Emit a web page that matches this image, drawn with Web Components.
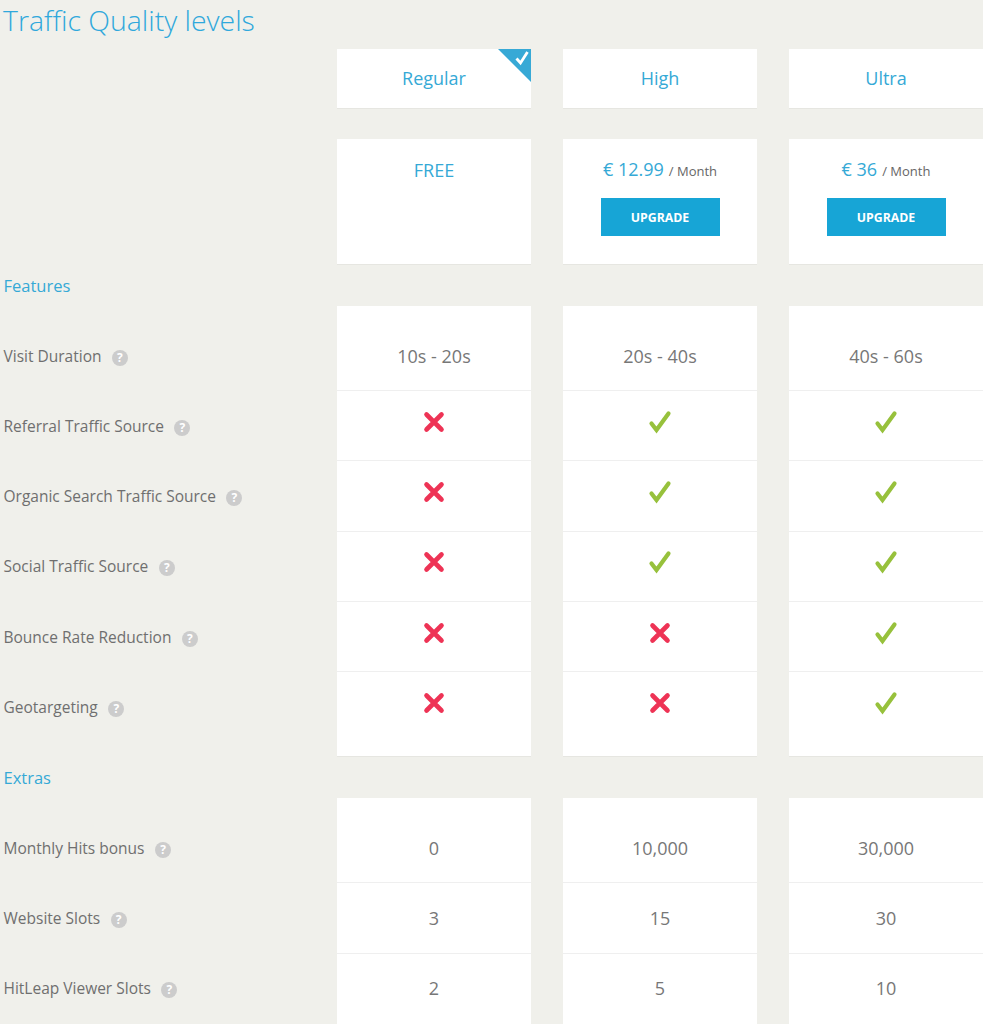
<!DOCTYPE html>
<html>
<head>
<meta charset="utf-8">
<title>Traffic Quality levels</title>
<style>
  html, body { margin: 0; padding: 0; background: #f0f0eb; }
  body { height: 1024px; overflow: hidden; font-family: "Open Sans", sans-serif; }
  .free { margin-top: 1px; }
</style>
</head>
<body>
<tq-page>
  <tq-title>Traffic Quality levels</tq-title>

  <tq-row kind="plan">
    <tq-cell kind="plan" selected>Regular</tq-cell>
    <tq-cell kind="plan">High</tq-cell>
    <tq-cell kind="plan">Ultra</tq-cell>
  </tq-row>

  <tq-row kind="price">
    <tq-cell kind="price"><span class="free">FREE</span></tq-cell>
    <tq-cell kind="price"><tq-price amount="€ 12.99"></tq-price></tq-cell>
    <tq-cell kind="price"><tq-price amount="€ 36"></tq-price></tq-cell>
  </tq-row>

  <tq-section first>Features</tq-section>
  <tq-row label="Visit Duration" pos="first"><tq-cell>10s - 20s</tq-cell><tq-cell>20s - 40s</tq-cell><tq-cell>40s - 60s</tq-cell></tq-row>
  <tq-row label="Referral Traffic Source"><tq-cell><tq-mark no></tq-mark></tq-cell><tq-cell><tq-mark></tq-mark></tq-cell><tq-cell><tq-mark></tq-mark></tq-cell></tq-row>
  <tq-row label="Organic Search Traffic Source"><tq-cell><tq-mark no></tq-mark></tq-cell><tq-cell><tq-mark></tq-mark></tq-cell><tq-cell><tq-mark></tq-mark></tq-cell></tq-row>
  <tq-row label="Social Traffic Source"><tq-cell><tq-mark no></tq-mark></tq-cell><tq-cell><tq-mark></tq-mark></tq-cell><tq-cell><tq-mark></tq-mark></tq-cell></tq-row>
  <tq-row label="Bounce Rate Reduction"><tq-cell><tq-mark no></tq-mark></tq-cell><tq-cell><tq-mark no></tq-mark></tq-cell><tq-cell><tq-mark></tq-mark></tq-cell></tq-row>
  <tq-row label="Geotargeting" pos="last"><tq-cell><tq-mark no></tq-mark></tq-cell><tq-cell><tq-mark no></tq-mark></tq-cell><tq-cell><tq-mark></tq-mark></tq-cell></tq-row>

  <tq-section>Extras</tq-section>
  <tq-row label="Monthly Hits bonus" pos="first"><tq-cell>0</tq-cell><tq-cell>10,000</tq-cell><tq-cell>30,000</tq-cell></tq-row>
  <tq-row label="Website Slots"><tq-cell>3</tq-cell><tq-cell>15</tq-cell><tq-cell>30</tq-cell></tq-row>
  <tq-row label="HitLeap Viewer Slots" pos="last"><tq-cell>2</tq-cell><tq-cell>5</tq-cell><tq-cell>10</tq-cell></tq-row>
</tq-page>

<script>
// shorthand: class with a shadow root filled from a template string
const define = (name, html, Base = HTMLElement) => {
  const template = document.createElement('template')
  template.innerHTML = html
  customElements.define(name, class extends Base {
    constructor() {
      super()
      this.attachShadow({ mode: 'open' }).appendChild(template.content.cloneNode(true))
    }
    connectedCallback() {
      if (this.render) this.render()
    }
  })
}

define('tq-page', `
  <style>
    :host { display: flex; flex-direction: column; width: 983px; height: 1024px; overflow: hidden; color: #666; font-family: "Open Sans", sans-serif; }
  </style>
  <slot></slot>
`)

define('tq-title', `
  <style>
    :host { display: block; flex: none; height: 49px; padding-left: 3px; box-sizing: border-box; font-size: 28.4px; font-weight: 300; line-height: 41px; color: #2fa8dc; white-space: nowrap; }
  </style>
  <slot></slot>
`)

define('tq-section', `
  <style>
    :host { display: block; flex: none; height: 41px; padding: 10px 0 0 3.5px; box-sizing: border-box; font-size: 16.5px; line-height: 22px; color: #35a9d6; }
  </style>
  <slot></slot>
`)

class RowBase extends HTMLElement {
  render() {
    this.shadowRoot.getElementById('text').textContent = this.getAttribute('label') || ''
    if (!this.hasAttribute('label')) this.shadowRoot.getElementById('label').hidden = true
    const kind = this.getAttribute('kind')
    const pos = this.getAttribute('pos')
    ;[...this.children].forEach((cell) => {
      if (pos) cell.setAttribute('pos', pos)
    })
    if (kind === 'plan') this.style.marginBottom = '30px'
  }
}

define('tq-row', `
  <style>
    :host { display: grid; grid-template-columns: 305px 194px 194px 194px; column-gap: 32px; flex: none; }
    #label { grid-column: 1; display: flex; align-items: center; gap: 10.5px; padding: 0 0 1px 3.5px; font-size: 15.5px; color: #6f6f6f; white-space: nowrap; }
    #label[hidden] { visibility: hidden; display: block; }
    :host([pos="first"]) #label { padding-top: 15px; }
    :host([pos="last"]) #label { padding-bottom: 16px; }
    .help { width: 16px; height: 16px; margin-top: 4px; border-radius: 50%; background: #ccc; color: #fff; font-size: 12px; font-weight: 700; line-height: 16px; text-align: center; }
  </style>
  <div id="label"><span id="text"></span><span class="help">?</span></div>
  <slot></slot>
`, RowBase)

define('tq-cell', `
  <style>
    :host { display: flex; justify-content: center; align-items: center; box-sizing: border-box; height: 70.33px; background: #fff; border-bottom: 1px solid #efefef; font-size: 18px; color: #777; position: relative; }
    :host([pos="first"]) { height: 85px; padding-top: 15px; }
    :host([pos="last"]) { height: 85px; padding-bottom: 15px; border-bottom-color: #e6e6e1; }
    :host([kind="plan"]) { height: 60px; padding-bottom: 1px; color: #35a9d6; border-bottom-color: #e6e6e1; }
    :host([kind="price"]) { height: 126px; align-items: flex-start; padding-top: 18px; color: #35a9d6; border-bottom-color: #e6e6e1; }
    #corner { display: none; position: absolute; top: 0; right: 0; }
    :host([selected]) #corner { display: block; }
  </style>
  <slot></slot>
  <svg id="corner" width="33" height="33" viewBox="0 0 33 33">
    <path d="M0 0H33V33Z" fill="#37a9d6"/>
    <path d="M18.5 9.5l4 4.5 7-11" fill="none" stroke="#fff" stroke-width="2.8"/>
  </svg>
`)

class PriceBase extends HTMLElement {
  render() {
    this.shadowRoot.getElementById('amount').textContent = this.getAttribute('amount')
  }
}

define('tq-price', `
  <style>
    :host { display: flex; flex-direction: column; align-items: center; }
    .line { display: flex; align-items: baseline; gap: 5px; line-height: 25px; white-space: nowrap; }
    #amount { font-size: 18px; color: #35a9d6; }
    .per { font-size: 13px; color: #666; }
    button { width: 119px; height: 38px; margin-top: 14px; padding: 0; border: 0; border-radius: 0; background: #17a5d6; color: #fff; font: 700 12.3px "Open Sans", sans-serif; }
  </style>
  <div class="line"><span id="amount"></span><span class="per">/ Month</span></div>
  <button>UPGRADE</button>
`, PriceBase)

class MarkBase extends HTMLElement {
  render() {
    const no = this.hasAttribute('no')
    this.shadowRoot.getElementById('yes').style.display = no ? 'none' : ''
    this.shadowRoot.getElementById('no').style.display = no ? '' : 'none'
  }
}

define('tq-mark', `
  <style>
    :host { display: block; width: 24px; height: 24px; margin-top: -8px; margin-left: -1px; }
    svg { display: block; }
  </style>
  <svg width="24" height="24" viewBox="0 0 24 24">
    <path id="no" d="M4.5 4.5L19.5 19.5M19.5 4.5L4.5 19.5" fill="none" stroke="#ee3355" stroke-width="4.6" stroke-linecap="round"/>
    <path id="yes" d="M3.5 13.5L8.5 20L20.5 3.5" fill="none" stroke="#97c13c" stroke-width="4.2" stroke-linecap="round" stroke-linejoin="miter"/>
  </svg>
`, MarkBase)
</script>
</body>
</html>
